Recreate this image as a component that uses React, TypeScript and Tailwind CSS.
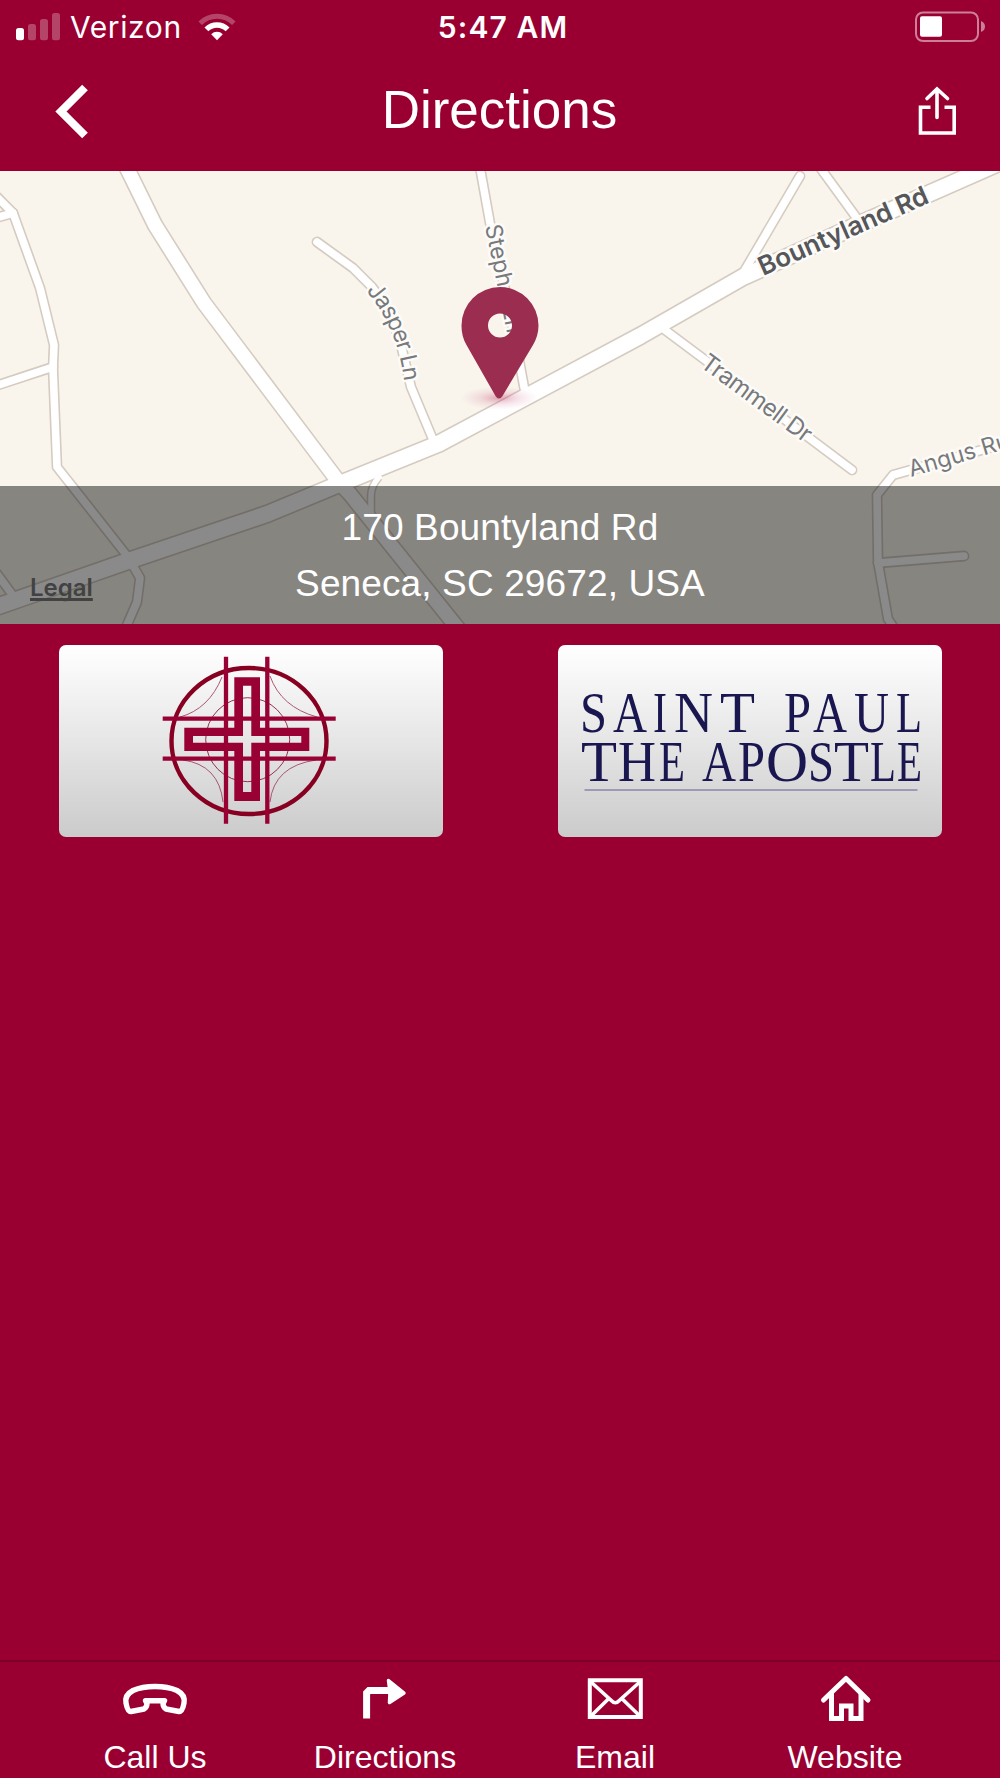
import React from 'react';

// Road geometry, in map coordinates (x 0-1000, y 170-624)
const MINOR_ROADS = [
  'M-8 192 L13 213 L40 288 L54 345 L53 368 L57 467 L128 557 L140 578 L137 602 L124 632',
  'M-8 219 L13 213',
  'M-8 387 L53 367',
  'M-8 567 L14 597',
  'M317 242 L353 268 L372 287 L390 312 L401 345 L411 387 L434 442',
  'M479 162 L490 223 L507 298 L520 365 L525 392',
  'M800 176 L742 275',
  'M816 162 L864 228',
  'M665 330 L852 470',
  'M1010 442 L893 475 L877 495 L878 562 L888 619 L898 634',
  'M878 563 L964 556',
];
const SECONDARY_ROADS = ['M123 160 L155 225 L204 303 L338 481 L350 494 L460 631'];
const MAIN_ROADS = ['M-10 609 L128 561 L267 514 L337 485 L438 444 L640 336 L743 277 L860 224 L1010 158'];
const SLIP_ROAD = 'M379 477 Q371 486 371 496 V512';

type Letter = [char: string, x: number, width: number];

const LOGO_LINES: { y: number; letters: Letter[] }[] = [
  {
    y: 731.5,
    letters: [
      ['S', 580, 27], ['A', 613, 34], ['I', 653, 14], ['N', 674, 39], ['T', 720, 35], [' ', 756, 20],
      ['P', 784, 27], ['A', 813, 34], ['U', 854, 35], ['L', 896, 26],
    ],
  },
  {
    y: 780.5,
    letters: [
      ['T', 581, 36], ['H', 618, 38], ['E', 659, 26], [' ', 686, 12], ['A', 702, 34], ['P', 738, 27],
      ['O', 766, 42], ['S', 808, 26], ['T', 834, 35], ['L', 870, 26], ['E', 897, 25],
    ],
  },
];

const StatusBar = () => (
  <div className="h-[50px] pt-1 flex items-center justify-between pl-4 pr-[15px] font-['Inter',sans-serif] text-[30px] text-white">
    <div className="w-[300px] flex items-center">
      <svg className="w-[44px] h-[28px]" viewBox="16 13 44 28" fill="#fff">
        <rect x="16" y="28" width="8" height="12.3" rx="2.5" />
        <g opacity="0.27">
          <rect x="28" y="24" width="8" height="16.3" rx="2.5" />
          <rect x="40" y="19" width="8" height="21.3" rx="2.5" />
          <rect x="52" y="13" width="8" height="27.3" rx="2.5" />
        </g>
      </svg>
      <span className="w-[112px] ml-[10px] leading-[47px] tracking-[0.6px]">Verizon</span>
      <svg className="w-[38px] h-[28px] ml-4" viewBox="198.5 13 38 28" fill="none" stroke="#fff">
        <path d="M200.7 23.2 A23.8 23.8 0 0 1 234.3 23.2" strokeWidth="5" opacity="0.27" />
        <path d="M206.9 29.4 A15 15 0 0 1 228.1 29.4" strokeWidth="5.5" />
        <path d="M211.7 34.2 A8.2 8.2 0 0 1 223.3 34.2 L217.5 40.2 Z" fill="#fff" stroke="none" />
      </svg>
    </div>
    <span className="font-semibold leading-[47px] pt-px whitespace-nowrap tracking-[1.1px] ml-[5px]">5:47 AM</span>
    <div className="w-[300px] flex justify-end">
      <svg className="w-[71px] h-[32px]" viewBox="914 12 71 32">
        <rect x="916" y="13.5" width="62" height="28.5" rx="7" fill="none" stroke="#cc7f98" strokeWidth="2" />
        <rect x="920" y="17.3" width="22" height="20.5" rx="2" fill="#fff" />
        <path d="M981 22 Q985 23.5 985 27.5 Q985 31.5 981 33 Z" fill="#cc7f98" />
      </svg>
    </div>
  </div>
);

const NavBar = () => (
  <div className="h-[121px] flex items-center justify-between pl-[54px] pr-[43px] pb-[2px]">
    <svg className="w-[60px] h-[56px] mt-1" viewBox="54 84 60 56" fill="none" stroke="#fff">
      <path d="M85 87.5 L61 111.5 L85 135.5" strokeWidth="8" />
    </svg>
    <h1 className="font-['Liberation_Sans',sans-serif] text-[53px] leading-[60px] text-white mt-[1px] ml-[-32px]">Directions</h1>
    <svg className="w-[40px] h-[50px] mt-0.5" viewBox="917 86 40 50" fill="none" stroke="#fff" strokeWidth="3.6">
      <path d="M930.5 107.3 H920.5 V133 H954.2 V107.3 H944.5" />
      <path d="M937 89 V117.5 M927 98.5 L937 89 L947.5 98.5" strokeLinecap="round" />
    </svg>
  </div>
);

const Roads = ({ paths, width }: { paths: string[]; width: number }) => (
  <>
    {paths.map(d => <path key={d} d={d} strokeWidth={width} />)}
  </>
);

const MapView = () => (
  <section className="relative h-[453px] overflow-hidden bg-[#f9f5ed]">
    <svg className="block w-full h-full" viewBox="0 171 1000 453">
      <defs>
        <radialGradient id="pinShadow">
          <stop offset="0" stopColor="#b8285a" stopOpacity="0.4" />
          <stop offset="0.45" stopColor="#c44a76" stopOpacity="0.17" />
          <stop offset="1" stopColor="#d98aa5" stopOpacity="0" />
        </radialGradient>
        <path id="jasper" d="M366 291 Q399 328 405 388" />
        <path id="stephen" d="M485 226 L511 352" />
        <path id="trammell" d="M699 366 L811 448" />
        <path id="bountyland" d="M763 276 L948 194.5" />
        <path id="angus" d="M911 477 L1030 442" />
      </defs>

      <g fill="none" strokeLinecap="round" strokeLinejoin="round">
        <g stroke="#d5cbc0">
          <Roads paths={MINOR_ROADS} width={10.8} />
          <Roads paths={SECONDARY_ROADS} width={17} />
          <Roads paths={MAIN_ROADS} width={19} />
          <path d={SLIP_ROAD} strokeWidth={8.5} strokeLinecap="butt" />
        </g>
        <g stroke="#fff">
          <Roads paths={MINOR_ROADS} width={7.6} />
          <Roads paths={SECONDARY_ROADS} width={13.8} />
          <Roads paths={MAIN_ROADS} width={15.8} />
          <path d={SLIP_ROAD} strokeWidth={5.5} />
        </g>
      </g>

      <g
        className="font-['Inter',sans-serif] text-[23px]"
        fill="#77797b"
        stroke="#fdfbf8"
        strokeWidth="5"
        strokeLinejoin="round"
        paintOrder="stroke"
      >
        <text textLength="100"><textPath href="#jasper">Jasper Ln</textPath></text>
        <text><textPath href="#stephen">Steph<tspan dx="14"> Ln</tspan></textPath></text>
        <text className="text-[24px]" textLength="131"><textPath href="#trammell">Trammell Dr</textPath></text>
        <text><textPath href="#angus">Angus Run</textPath></text>
        <text className="text-[26px] font-semibold" fill="#55575a" textLength="183">
          <textPath href="#bountyland">Bountyland Rd</textPath>
        </text>
      </g>

      <ellipse cx="499" cy="398" rx="40" ry="12" fill="url(#pinShadow)" />
      <path
        fill="#9b2d50"
        fillRule="evenodd"
        d="M461.5 325.5 A38.5 38.5 0 0 1 538.5 325.5 C538.5 333 536.5 339 533 345 L502.5 396 Q499 401 495.5 396 L466.5 345 C463 339 461.5 333 461.5 325.5 Z M488 325.5 a12 12 0 1 0 24 0 a12 12 0 1 0 -24 0 Z"
      />
    </svg>

    <div className="absolute inset-x-0 bottom-0 h-[138px] pt-[14px] bg-black/46 text-center text-white font-['Liberation_Sans',sans-serif] text-[37px] leading-[56px]">
      <p className="tracking-[0.12px]">170 Bountyland Rd</p>
      <p className="tracking-[0.12px]">Seneca, SC 29672, USA</p>
      <span className="absolute left-[30px] bottom-[19px] font-['Inter',sans-serif] text-[24px] leading-[34px] font-semibold text-[#424242] underline decoration-[3px] underline-offset-[2px] [text-decoration-skip-ink:none]">
        Legal
      </span>
    </div>
  </section>
);

const CrossLogo = () => (
  <svg className="w-full h-full" viewBox="59 645 384 192" fill="none" stroke="#990033">
    <ellipse cx="249" cy="741" rx="77.5" ry="73" stroke="#870022" strokeWidth="4.4" />
    <circle cx="247.7" cy="739.7" r="42" stroke="#8c1c3c" strokeWidth="0.9" />
    <g stroke="#a34560" strokeWidth="0.9">
      <path d="M222 677 Q209 709 180 717" />
      <path d="M270 676 Q281 707 317 717" />
      <path d="M183 760 Q219 765 223 802" />
      <path d="M270 802 Q274 766 316 760" />
    </g>
    <path
      stroke="none"
      fill="#990033"
      fillRule="evenodd"
      d="M234.3 677.3 H260 V727.7 H309.3 V751 H260 V801 H234.3 V751 H184.3 V727.7 H234.3 Z M243 685.7 V736 H193 V742.7 H243 V792 H251.3 V742.7 H301.3 V736 H251.3 V685.7 Z"
    />
    <path d="M226 656.7 V823.7 M267.3 656.7 V823.7 M162.7 718.7 H335.7 M162.7 758.7 H335.7" strokeWidth="4.3" />
  </svg>
);

const WordmarkLogo = () => (
  <svg className="w-full h-full" viewBox="558 645 384 192">
    {LOGO_LINES.map(line => (
      <text key={line.y} y={line.y} fill="#1a1750" className="font-['Liberation_Serif',serif] text-[58px] leading-none whitespace-pre">
        {line.letters.map(([char, x, width]) => (
          <tspan key={x} x={x} textLength={width} lengthAdjust="spacingAndGlyphs">{char}</tspan>
        ))}
      </text>
    ))}
    <path d="M584.5 790 H917.5" stroke="#9c9ab4" strokeWidth="2.2" />
  </svg>
);

const LogoCard = ({ children }: { children: React.ReactNode }) => (
  <div className="w-[384px] h-[192px] rounded-[7px] bg-linear-to-b from-white via-[#e6e6e6] to-[#cbcbcb]">
    {children}
  </div>
);

const TABS = [
  {
    label: 'Call Us',
    icon: (
      <path
        d="M-24 31.5 Q-27.5 31.5 -29 23 Q-30.5 15 -22 10.5 Q-13 6.5 0 6.5 Q13 6.5 22 10.5 Q30.5 15 29 23 Q27.5 31.5 24 31.5 L11 29 Q8 27 8 23.5 L9.5 20.7 H-9.5 L-8 23.5 Q-8 27 -11 29 Z"
        strokeWidth="5.4"
      />
    ),
  },
  {
    label: 'Directions',
    icon: (
      <g>
        <path d="M-18.4 38.5 V13 L-16 10.5 H8" strokeWidth="7" strokeLinejoin="miter" strokeLinecap="butt" />
        <path d="M3.5 0.5 L19 13 L4.5 22.5 L5 12 Z" fill="#fff" strokeWidth="3.5" />
      </g>
    ),
  },
  {
    label: 'Email',
    icon: (
      <g strokeLinejoin="miter">
        <path d="M-25.2 0.2 H25.8 V37 H-25.2 Z" strokeWidth="4" />
        <path d="M-24 2 L-3.7 20.5 Q0.3 25 4.3 20.5 L24.8 2 M-24 36 L-6.7 19 M24.8 36 L7.3 19" strokeWidth="3.6" />
      </g>
    ),
  },
  {
    label: 'Website',
    icon: (
      <g>
        <path d="M-21.5 20 L1 -1.5 L23 20" strokeWidth="5" />
        <path d="M-13.5 14 V38.5 H-3.5 V26 H6 V38.5 H16 V14" strokeWidth="5" strokeLinejoin="miter" />
      </g>
    ),
  },
];

const TabBar = () => (
  <nav className="h-[118px] px-10 pt-[9px] border-t-2 border-[#7c0028] grid grid-cols-4">
    {TABS.map(tab => (
      <div key={tab.label} className="flex flex-col items-center">
        <svg
          className="w-[70px] h-[52px]"
          viewBox="-35 -9 70 52"
          fill="none"
          stroke="#fff"
          strokeLinecap="round"
          strokeLinejoin="round"
        >
          {tab.icon}
        </svg>
        <span className="mt-4 font-['Liberation_Sans',sans-serif] text-[32px] leading-[36px] text-white">{tab.label}</span>
      </div>
    ))}
  </nav>
);

export default function App() {
  return (
    <div className="w-[1000px] h-[1778px] flex flex-col overflow-hidden bg-[#990031]">
      <header className="h-[171px]">
        <StatusBar />
        <NavBar />
      </header>

      <MapView />

      <main className="flex-1 pt-[21px] grid grid-cols-2 justify-items-center content-start pl-[1px]">
        <LogoCard>
          <CrossLogo />
        </LogoCard>
        <LogoCard>
          <WordmarkLogo />
        </LogoCard>
      </main>

      <TabBar />
    </div>
  );
}
